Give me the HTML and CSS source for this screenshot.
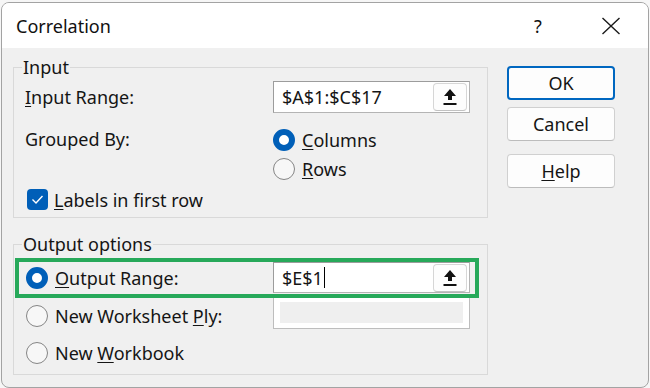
FILE: index.html
```html
<!DOCTYPE html>
<html lang="en">

<head>
    <meta charset="UTF-8">
    <meta name="viewport" content="width=device-width, initial-scale=1.0">
    <title>Correlation</title>
    <link rel="stylesheet" href="styles.css">
</head>

<body>

    <div class="window">
        <div class="titlebar">
            <span class="title">Correlation</span>
            <span class="help-btn">?</span>
            <span class="close-btn">
                <svg width="20" height="18" viewBox="0 0 20 18">
                    <path d="M1.5 1 L18.5 17 M18.5 1 L1.5 17" stroke="#1b1b1b" stroke-width="1.4" fill="none" />
                </svg>
            </span>
        </div>

        <div class="dialog-body">
            <div class="groups">
                <!-- Input group -->
                <fieldset class="group group-input">
                    <legend>Input</legend>

                    <div class="group-content">
                        <div class="field-row">
                            <span class="field-label"><u>I</u>nput Range:</span>
                            <div class="range-box">
                                <span class="range-text">$A$1:$C$17</span>
                                <span class="pick-btn">
                                    <svg width="14" height="18" viewBox="0 0 14 18">
                                        <polygon points="7,1 13,8 9,8 9,12 5,12 5,8 1,8" fill="#111" />
                                        <rect x="0.5" y="15" width="13" height="2" fill="#111" />
                                    </svg>
                                </span>
                            </div>
                        </div>

                        <div class="field-row grouped-row">
                            <span class="field-label tall">Grouped By:</span>
                            <div class="radio-list">
                                <div class="radio-item"><span class="radio checked"></span><span><u>C</u>olumns</span></div>
                                <div class="radio-item"><span class="radio"></span><span><u>R</u>ows</span></div>
                            </div>
                        </div>

                        <div class="check-item">
                            <span class="checkbox">
                                <svg width="21" height="21" viewBox="0 0 21 21">
                                    <polyline points="5.5,10.5 9,14 15.5,7" stroke="#fff" stroke-width="1.4" fill="none" />
                                </svg>
                            </span>
                            <span><u>L</u>abels in first row</span>
                        </div>
                    </div>
                </fieldset>

                <!-- Output group -->
                <fieldset class="group group-output">
                    <legend>Output options</legend>

                    <div class="out-row highlighted">
                        <div class="radio-item"><span class="radio checked"></span><span><u>O</u>utput Range:</span></div>
                        <div class="range-box short">
                            <span class="range-text">$E$1</span><span class="caret"></span>
                            <span class="pick-btn">
                                <svg width="14" height="18" viewBox="0 0 14 18">
                                    <polygon points="7,1 13,8 9,8 9,12 5,12 5,8 1,8" fill="#111" />
                                    <rect x="0.5" y="15" width="13" height="2" fill="#111" />
                                </svg>
                            </span>
                        </div>
                    </div>

                    <div class="out-row ply-row">
                        <div class="radio-item"><span class="radio"></span><span>New Worksheet <u>P</u>ly:</span></div>
                        <div class="disabled-box"><div class="disabled-fill"></div></div>
                    </div>

                    <div class="out-row book-row">
                        <div class="radio-item"><span class="radio"></span><span>New <u>W</u>orkbook</span></div>
                    </div>
                </fieldset>
            </div>

            <div class="buttons">
                <button class="btn btn-default">OK</button>
                <button class="btn btn-cancel">Cancel</button>
                <button class="btn btn-help"><u>H</u>elp</button>
            </div>
        </div>
    </div>

</body>

</html>
```

FILE: styles.css
```css
body {
    margin: 0;
    background-color: #f6f6f6;
    font-family: 'Noto Sans', 'Open Sans', sans-serif;
    font-size: 18px;
    color: #151515;
    overflow: hidden;
}

u {
    text-decoration-thickness: 1px;
    text-underline-offset: 2px;
}

.window {
    box-sizing: border-box;
    margin: 2px 0 0 1px;
    width: 648px;
    height: 386px;
    border: 1px solid #a3a3a3;
    border-radius: 8px;
    overflow: hidden;
    background: #f0f0f0;
}

/* Title bar */
.titlebar {
    height: 45px;
    background: #fff;
    display: flex;
    align-items: center;
    padding: 0 14px;
}

.title {
    font-size: 18px;
    color: #111;
}

.help-btn {
    margin-left: auto;
    width: 46px;
    text-align: center;
    font-size: 18px;
    color: #111;
}

.close-btn {
    width: 46px;
    margin-left: 27px;
    display: flex;
    justify-content: center;
}

/* Body */
.dialog-body {
    display: flex;
    gap: 19px;
    padding: 9px 0 0 11px;
}

.groups {
    width: 475px;
}

.group {
    margin: 0;
    padding: 0;
    border: 1px solid #d9d9d9;
    min-width: 0;
}

.group legend {
    margin-left: 8px;
    padding: 0 1px;
    line-height: 20px;
}

.group-content {
    padding: 4px 17px 3px 11px;
}

.group-output {
    margin-top: 16px;
    padding: 4px 0 2px 0;
}

.field-row {
    display: grid;
    grid-template-columns: 248px 197px;
    align-items: center;
}

.grouped-row {
    margin-top: 12px;
    align-items: start;
}

.field-label.tall {
    line-height: 29px;
}

.range-box {
    box-sizing: border-box;
    height: 32px;
    display: flex;
    align-items: center;
    padding-left: 8px;
    background: #fff;
    border: 1px solid #b4b4b4;
    border-top-color: #9c9c9c;
    border-left-color: #9c9c9c;
}

.range-box.short {
    height: 31px;
    align-self: start;
}

.caret {
    width: 1px;
    height: 21px;
    background: #000;
    margin-left: 1px;
}

.pick-btn {
    box-sizing: border-box;
    margin-left: auto;
    margin-right: 2px;
    width: 34px;
    height: 28px;
    display: flex;
    align-items: center;
    justify-content: center;
    background: #fdfdfd;
    border: 1px solid #d6d6d6;
    border-bottom-color: #c2c2c2;
    border-radius: 4px;
}

/* Radios and checkbox */
.radio-list {
    display: flex;
    flex-direction: column;
}

.radio-item {
    height: 29px;
    display: flex;
    align-items: center;
    gap: 7px;
}

.radio {
    box-sizing: border-box;
    width: 22px;
    height: 22px;
    border-radius: 50%;
    border: 1.5px solid #858585;
    background: #f7f7f7;
    flex-shrink: 0;
}

.radio.checked {
    border: 6.5px solid #005fb8;
    background: #fff;
}

.check-item {
    margin-top: 2px;
    height: 29px;
    display: flex;
    align-items: center;
    gap: 6px;
    padding-left: 2px;
}

.checkbox {
    width: 21px;
    height: 21px;
    border-radius: 4px;
    background: #005fb8;
    display: flex;
}

/* Output rows */
.out-row {
    display: grid;
    grid-template-columns: 247px 197px;
    align-items: center;
    padding-left: 12px;
}

.out-row.highlighted {
    box-sizing: border-box;
    height: 40px;
    margin: 0 8px 0 1px;
    padding: 0 5px 0 7px;
    border: 4px solid #27a95a;
}

.ply-row {
    height: 36px;
}

.book-row {
    height: 38px;
}

.disabled-box {
    box-sizing: border-box;
    align-self: start;
    height: 31px;
    padding: 4px 6px 5px 6px;
    background: #fff;
    border: 1px solid #bdbdbd;
    border-top: 0;
}

.disabled-fill {
    height: 100%;
    background: #efefef;
}

/* Buttons */
.buttons {
    display: flex;
    flex-direction: column;
    padding-top: 9px;
    width: 108px;
}

.btn {
    box-sizing: border-box;
    height: 34px;
    font-family: inherit;
    font-size: 18px;
    color: #151515;
    background: #fdfdfd;
    border: 1px solid #d0d0d0;
    border-bottom-color: #bcbcbc;
    border-radius: 4px;
    padding: 0;
}

.btn-default {
    border: 2px solid #0067c0;
}

.btn-cancel {
    margin-top: 7px;
}

.btn-help {
    margin-top: 13px;
}
```
